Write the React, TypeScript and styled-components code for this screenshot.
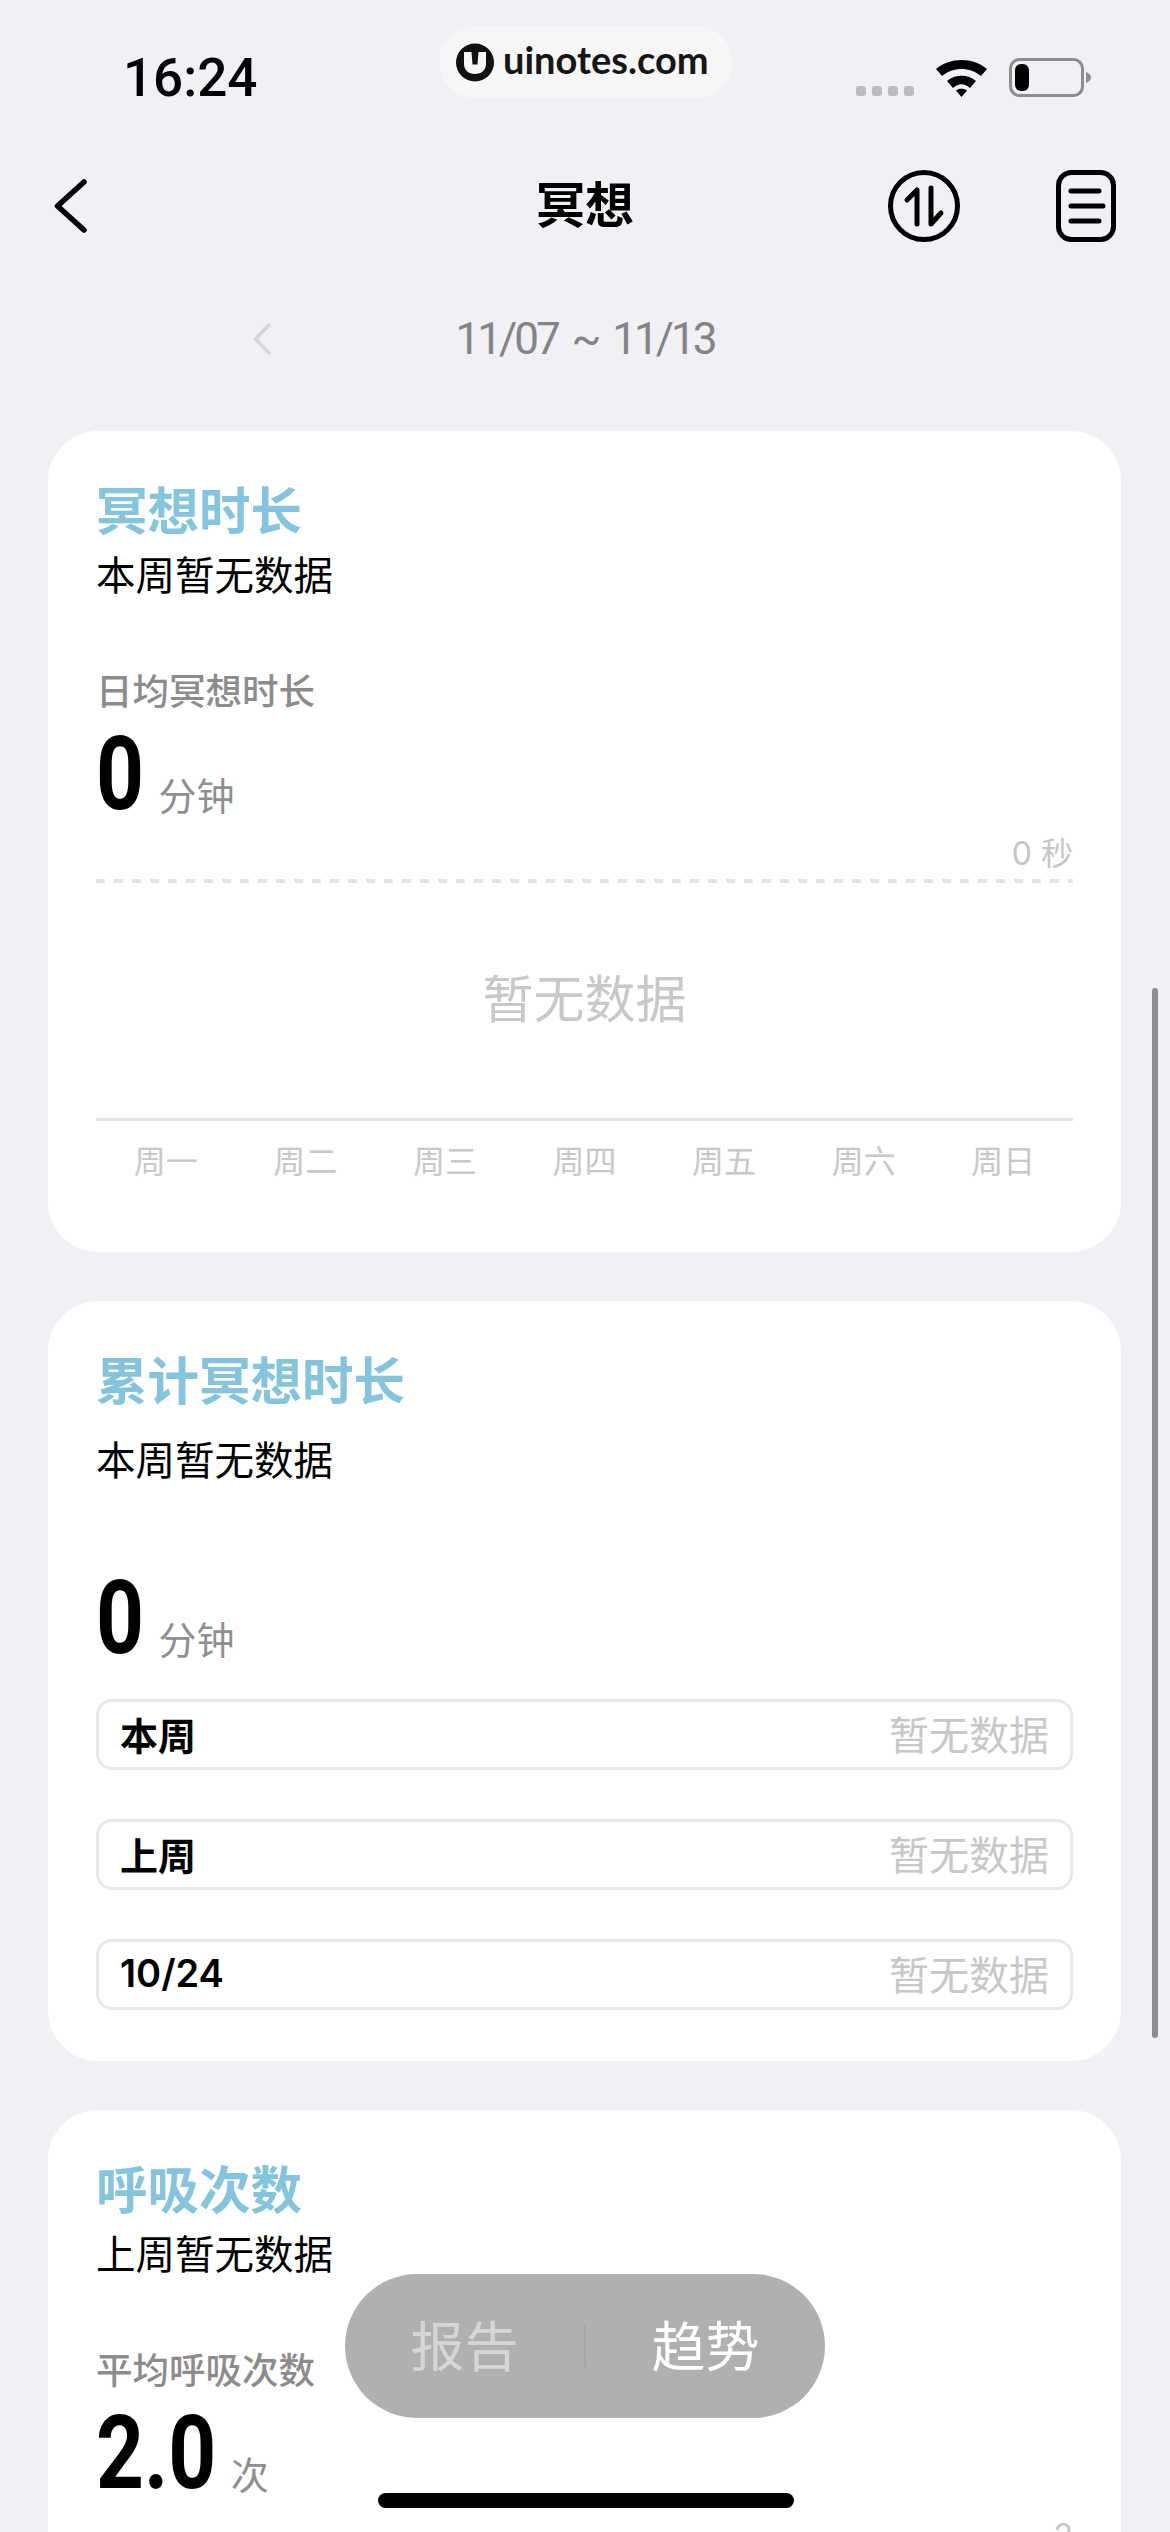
import React from 'react';
import styled, { createGlobalStyle } from 'styled-components';

const GlobalStyle = createGlobalStyle`
  html, body {
    margin: 0;
    padding: 0;
    background: #f0f0f5;
  }
  * {
    box-sizing: border-box;
  }
`
const CJK = `Inter, "Noto Sans CJK SC", sans-serif`;

const Page = styled.div`
  position: relative;
  width: 1170px;
  height: 2532px;
  overflow: hidden;
  background: #f0f0f5;
  font-family: ${CJK};
  color: #000;
`
const StatusBar = styled.div`
  height: 165px;
  padding: 53px 79px 0 123px;
  display: flex;
  justify-content: space-between;
  align-items: flex-start;
`
const Time = styled.div`
  font-family: Roboto, sans-serif;
  font-size: 53px;
  line-height: 50px;
  font-weight: 500;
`
const StatusIcons = styled.div`
  display: flex;
  align-items: flex-end;
  margin-top: 5px;
`
const Dots = styled.div`
  display: flex;
  gap: 6px;
  margin-right: 22px;
  margin-bottom: 1px;
`
const Dot = styled.span`
  width: 10px;
  height: 10px;
  border-radius: 3px;
  background: #bdbdc0;
`
const WatermarkPill = styled.div`
  position: absolute;
  left: 439px;
  top: 26px;
  width: 293px;
  height: 72px;
  border-radius: 36px;
  background: #f6f6f6;
  display: flex;
  align-items: center;
  padding-left: 17px;
  gap: 9px;
`
const WatermarkText = styled.span`
  font-family: Lato, sans-serif;
  font-size: 38px;
  line-height: 38px;
  font-weight: 700;
  color: #161616;
  margin-top: -6px;
`
const NavBar = styled.div`
  height: 80px;
  padding: 0 54px;
  display: grid;
  grid-template-columns: 1fr auto 1fr;
  align-items: center;
`
const NavTitle = styled.div`
  font-size: 49px;
  line-height: 82px;
  font-weight: 700;
`
const NavActions = styled.div`
  display: flex;
  justify-content: flex-end;
  gap: 96px;
`
const DateRow = styled.div`
  height: 60px;
  margin-top: 64px;
  margin-bottom: 62px;
  display: grid;
  grid-template-columns: 1fr auto 1fr;
  align-items: center;
`
const DatePrev = styled.div`
  display: flex;
  justify-content: flex-end;
  margin-right: 185px;
`
const DateText = styled.div`
  font-family: Roboto, sans-serif;
  font-size: 44px;
  line-height: 60px;
  font-weight: 400;
  letter-spacing: -3px;
  word-spacing: 6px;
  color: #838388;
`
const Card = styled.section<{ $height: number }>`
  height: ${p => p.$height}px;
  margin: 0 49px 49px 48px;
  padding: 50px 48px 0 48px;
  border-radius: 50px;
  background: #fff;
`
const CardTitle = styled.h2`
  margin: 0;
  font-size: 51.500px;
  line-height: 60px;
  font-weight: 700;
  color: #84c5dd;
`
const CardSub = styled.p<{ $gap: number }>`
  margin: ${p => p.$gap}px 0 0;
  font-size: 39.500px;
  line-height: 50px;
  font-weight: 400;
`
const StatLabel = styled.div<{ $gap: number }>`
  margin-top: ${p => p.$gap}px;
  font-size: 36.500px;
  line-height: 44px;
  font-weight: 500;
  color: #8c8c8c;
`
const StatRow = styled.div<{ $gap: number }>`
  margin-top: ${p => p.$gap}px;
  height: 84px;
  display: flex;
  align-items: flex-end;
  gap: 15px;
`
const StatValue = styled.span<{ $trim: number }>`
  display: inline-block;
  font-family: Roboto, sans-serif;
  font-size: 102px;
  line-height: 84px;
  font-weight: 700;
  transform: scaleX(0.82);
  transform-origin: left center;
  margin-right: -${p => p.$trim}px;
`
const StatUnit = styled.span`
  font-size: 38px;
  line-height: 50px;
  color: #8f8f8f;
  margin-bottom: -5px;
  margin-left: -1px;
`
const ScaleLabel = styled.div`
  text-align: right;
  font-size: 32px;
  line-height: 40px;
  color: #c6c6c6;
  margin-top: 18px;
`
const DashedLine = styled.div`
  margin-top: 5px;
  height: 4px;
  background: repeating-linear-gradient(to right, #e4e4e6 0 9px, transparent 9px 18px);
`
const EmptyChart = styled.div`
  height: 235px;
  padding-bottom: 9px;
  display: flex;
  align-items: center;
  justify-content: center;
  font-size: 51px;
  color: #c8c8c8;
`
const Axis = styled.div`
  height: 3px;
  background: #e4e4e6;
`
const WeekRow = styled.div`
  display: grid;
  grid-template-columns: repeat(7, 1fr);
  margin-top: 21px;
`
const WeekDay = styled.span`
  text-align: center;
  font-size: 32px;
  line-height: 40px;
  color: #c8c8c8;
`
const RowList = styled.div`
  margin-top: 39px;
  display: flex;
  flex-direction: column;
  gap: 49px;
`
const WeekTotal = styled.div`
  height: 71px;
  padding: 0 21px 3px;
  border: 3px solid #e8e8ea;
  border-radius: 16px;
  display: flex;
  justify-content: space-between;
  align-items: center;
`
const WeekTotalName = styled.span`
  font-size: 38px;
  font-weight: 600;
`
const WeekTotalValue = styled.span`
  font-size: 40px;
  color: #c8c8c8;
`
const TinyValue = styled.div`
  position: absolute;
  right: 97px;
  top: 2516px;
  font-size: 32px;
  line-height: 40px;
  color: #c6c6c6;
`
const Switcher = styled.div`
  position: absolute;
  left: 345px;
  top: 2274px;
  width: 480px;
  height: 144px;
  border-radius: 72px;
  background: #b0b0b0;
  display: grid;
  grid-template-columns: 1fr 2px 1fr;
  align-items: center;
  justify-items: center;
`
const SwitchLabel = styled.span<{ $active?: boolean }>`
  font-size: 54px;
  margin-top: -6px;
  color: ${p => (p.$active ? '#fff' : '#d6d6d6')};
`
const SwitchDivider = styled.span`
  width: 2px;
  height: 42px;
  background: #a6a6a6;
`
const HomeIndicator = styled.div`
  position: absolute;
  left: 378px;
  top: 2493px;
  width: 416px;
  height: 15px;
  border-radius: 8px;
  background: #000;
`
const ScrollThumb = styled.div`
  position: absolute;
  left: 1152px;
  top: 988px;
  width: 6px;
  height: 1050px;
  border-radius: 3px;
  background: #8e8e90;
`

const LogoMark = () => (
  <svg width="38" height="39" viewBox="0 0 38 39">
    <circle cx="19" cy="19.500" r="19" fill="#111" />
    <path d="M8 9h7.500l1 12.500h5L22.500 9H30v12c0 6-4.500 10-11 10S8 27 8 21z" fill="#f6f6f6" />
  </svg>
);

const WifiIcon = () => (
  <svg width="51" height="37" viewBox="0 0 51 37">
    <path d="M0 9C14-3 37-3 51 9l-6 7C34 6.500 17 6.500 6 16z" fill="#000" />
    <path d="M11 21c8-7 21-7 29 0l-6 7c-6-5-11-5-17 0z" fill="#000" />
    <path d="M20 30.500c3-2.500 8-2.500 11 0L25.500 37z" fill="#000" />
  </svg>
);

const BatteryIcon = () => (
  <svg width="82" height="39" viewBox="0 0 82 39" style={{ marginLeft: 22 }}>
    <rect x="1.500" y="1.500" width="72" height="36" rx="9" fill="none" stroke="#8e8e92" strokeWidth="3" />
    <rect x="6" y="6" width="14" height="27" rx="6" fill="#000" />
    <path d="M77 14c3 1 5 3 5 5.500S80 24 77 25z" fill="#8e8e92" />
  </svg>
);

const BackIcon = () => (
  <svg width="34" height="56" viewBox="0 0 34 56" fill="none">
    <path d="M30 4 3.500 28 30 52" stroke="#000" strokeWidth="5.500" strokeLinecap="round" strokeLinejoin="round" />
  </svg>
);

const SwapIcon = () => (
  <svg width="72" height="72" viewBox="0 0 72 72" fill="none" stroke="#000" strokeWidth="5" strokeLinecap="round" strokeLinejoin="round">
    <circle cx="36" cy="36" r="33.500" />
    <path d="M19 30 29 20V54" />
    <path d="M43 18V54L53 43" />
  </svg>
);

const ReportIcon = () => (
  <svg width="60" height="72" viewBox="0 0 60 72" fill="none" stroke="#000" strokeWidth="5" strokeLinecap="round">
    <rect x="2.500" y="2.500" width="55" height="67" rx="13" />
    <path d="M15 21h28M15 36h32M15 51h28" />
  </svg>
);

const SmallChevron = () => (
  <svg width="18" height="32" viewBox="0 0 18 32" fill="none">
    <path d="M16 2 2.500 16 16 30" stroke="#d6d6d8" strokeWidth="3.500" strokeLinecap="round" strokeLinejoin="round" />
  </svg>
);

const weekDays = ['周一', '周二', '周三', '周四', '周五', '周六', '周日'];
const weekTotals = ['本周', '上周', '10/24'];

function App() {
  return (
    <>
      <GlobalStyle />
      <Page>
        <StatusBar>
          <Time>16:24</Time>
          <StatusIcons>
            <Dots>
              <Dot /><Dot /><Dot /><Dot />
            </Dots>
            <WifiIcon />
            <BatteryIcon />
          </StatusIcons>
        </StatusBar>
        <WatermarkPill>
          <LogoMark />
          <WatermarkText>uinotes.com</WatermarkText>
        </WatermarkPill>

        <NavBar>
          <BackIcon />
          <NavTitle>冥想</NavTitle>
          <NavActions>
            <SwapIcon />
            <ReportIcon />
          </NavActions>
        </NavBar>

        <DateRow>
          <DatePrev><SmallChevron /></DatePrev>
          <DateText>11/07 ~ 11/13</DateText>
          <span />
        </DateRow>

        <Card $height={821}>
          <CardTitle>冥想时长</CardTitle>
          <CardSub $gap={10}>本周暂无数据</CardSub>
          <StatLabel $gap={69}>日均冥想时长</StatLabel>
          <StatRow $gap={18}>
            <StatValue $trim={10}>0</StatValue>
            <StatUnit>分钟</StatUnit>
          </StatRow>
          <ScaleLabel>0 秒</ScaleLabel>
          <DashedLine />
          <EmptyChart>暂无数据</EmptyChart>
          <Axis />
          <WeekRow>
            {weekDays.map(day => <WeekDay key={day}>{day}</WeekDay>)}
          </WeekRow>
        </Card>

        <Card $height={760}>
          <CardTitle>累计冥想时长</CardTitle>
          <CardSub $gap={25}>本周暂无数据</CardSub>
          <StatRow $gap={90}>
            <StatValue $trim={10}>0</StatValue>
            <StatUnit>分钟</StatUnit>
          </StatRow>
          <RowList>
            {weekTotals.map(name => (
              <WeekTotal key={name}>
                <WeekTotalName>{name}</WeekTotalName>
                <WeekTotalValue>暂无数据</WeekTotalValue>
              </WeekTotal>
            ))}
          </RowList>
        </Card>

        <Card $height={500}>
          <CardTitle>呼吸次数</CardTitle>
          <CardSub $gap={10}>上周暂无数据</CardSub>
          <StatLabel $gap={69}>平均呼吸次数</StatLabel>
          <StatRow $gap={18}>
            <StatValue $trim={26}>2.0</StatValue>
            <StatUnit>次</StatUnit>
          </StatRow>
        </Card>

        <TinyValue>2</TinyValue>
        <Switcher>
          <SwitchLabel>报告</SwitchLabel>
          <SwitchDivider />
          <SwitchLabel $active>趋势</SwitchLabel>
        </Switcher>
        <HomeIndicator />
        <ScrollThumb />
      </Page>
    </>
  );
}

export default App;
